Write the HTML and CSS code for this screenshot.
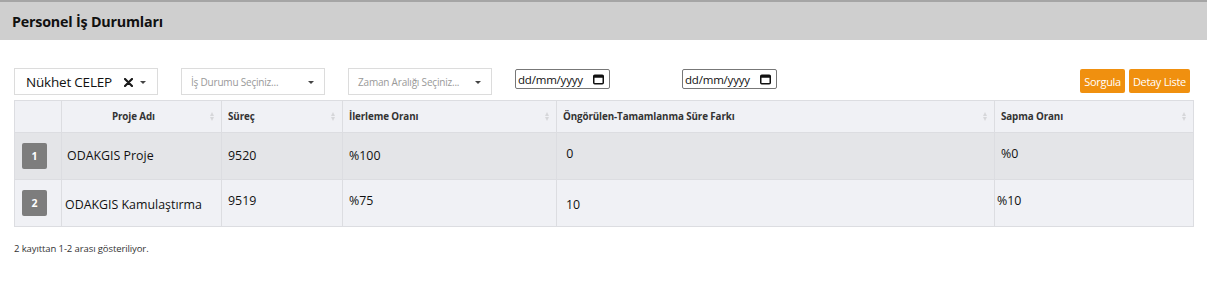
FILE: index.html
```html
<!DOCTYPE html>
<html lang="tr">
<head>
<meta charset="utf-8">
<link rel="stylesheet" href="styles.css">
</head>
<body>
<header class="page-head"><h1>Personel İş Durumları</h1></header>
<main class="content">
  <div class="filters">
    <div class="select sel-user"><span class="val">Nükhet CELEP</span><svg class="clear" width="9" height="9" viewBox="0 0 9 9"><path d="M1 1 L8 8 M8 1 L1 8" stroke="#1a1a1a" stroke-width="2.2" stroke-linecap="round"/></svg><span class="caret"></span></div>
    <div class="select"><span class="ph">İş Durumu Seçiniz...</span><span class="caret"></span></div>
    <div class="select"><span class="ph">Zaman Aralığı Seçiniz...</span><span class="caret"></span></div>
    <div class="date"><span>dd/mm/yyyy</span><svg width="11" height="11" viewBox="0 0 11 11"><rect x="0.75" y="1.25" width="9.5" height="8.5" rx="1" fill="none" stroke="#111" stroke-width="1.5"/><rect x="0.75" y="1.25" width="9.5" height="2.5" fill="#111"/></svg></div>
    <div class="date date2"><span>dd/mm/yyyy</span><svg width="11" height="11" viewBox="0 0 11 11"><rect x="0.75" y="1.25" width="9.5" height="8.5" rx="1" fill="none" stroke="#111" stroke-width="1.5"/><rect x="0.75" y="1.25" width="9.5" height="2.5" fill="#111"/></svg></div>
    <div class="buttons"><button class="btn">Sorgula</button><button class="btn">Detay Liste</button></div>
  </div>
  <table class="grid">
    <colgroup><col class="c0"><col class="c1"><col class="c2"><col class="c3"><col class="c4"><col class="c5"></colgroup>
    <thead>
      <tr>
        <th class="blank"></th>
        <th class="center">Proje Adı<i class="sort"></i></th>
        <th>Süreç<i class="sort"></i></th>
        <th>İlerleme Oranı<i class="sort"></i></th>
        <th>Öngörülen-Tamamlanma Süre Farkı<i class="sort"></i></th>
        <th>Sapma Oranı<i class="sort"></i></th>
      </tr>
    </thead>
    <tbody>
      <tr class="r1">
        <td><span class="badge">1</span></td>
        <td class="name">ODAKGIS Proje</td>
        <td>9520</td>
        <td>%100</td>
        <td class="up">&nbsp;0</td>
        <td class="up">%0</td>
      </tr>
      <tr class="r2">
        <td><span class="badge">2</span></td>
        <td class="name n2">ODAKGIS Kamulaştırma</td>
        <td class="up">9519</td>
        <td class="up">%75</td>
        <td class="down">10</td>
        <td class="up sh">%10</td>
      </tr>
    </tbody>
  </table>
  <p class="info">2 kayıttan 1-2 arası gösteriliyor.</p>
</main>
</body>
</html>
```
FILE: styles.css
```css
html, body { margin: 0; padding: 0; background: #fff; }
body { font-family: "Open Sans", "Noto Sans", sans-serif; color: #222; }

.page-head {
  background: #cfcfcf;
  border-top: 2px solid #a5a5a5;
  height: 38px;
  display: flex;
  align-items: center;
  padding-left: 12px;
}
.page-head h1 { margin: 0; font-size: 14.3px; font-weight: 700; color: #111; letter-spacing: -0.2px; }

.content { padding: 28px 14px 0 14px; }

.filters { display: flex; align-items: flex-start; height: 32px; }
.select {
  width: 144px; height: 27px; box-sizing: border-box;
  border: 1px solid #dcdcdc; background: #fff;
  display: flex; align-items: center; padding-left: 11px;
  margin-right: 23px; position: relative;
}
.select .val { font-size: 13.5px; color: #111; letter-spacing: -0.2px; }
.select .clear { margin-left: 12px; margin-top: 2px; }
.select .ph { font-size: 10px; color: #999; letter-spacing: -0.2px; }
.select:not(.sel-user) { padding-left: 9px; }
.select .caret {
  position: absolute; right: 10px; top: 12px;
  border-left: 3px solid transparent; border-right: 3px solid transparent; border-top: 3px solid #444;
}
.sel-user .caret { right: 11px; }

.date {
  width: 95px; height: 20px; box-sizing: border-box; margin-top: 1px;
  border: 1px solid #777; border-radius: 2px;
  display: flex; align-items: center; justify-content: space-between;
  padding: 0 5px 0 2px; font-size: 11.5px; color: #111; letter-spacing: -0.2px;
}
.date2 { margin-left: 72px; }

.buttons { margin-left: auto; margin-right: 3px; display: flex; gap: 4px; margin-top: 1px; }
.btn {
  background: #f0900f; color: #fff; border: 0; border-radius: 2px;
  font-family: "Open Sans", sans-serif; font-size: 11px; letter-spacing: -0.3px;
  height: 24px; padding: 0 4px;
}

.grid {
  width: 1179px; border-collapse: collapse; table-layout: fixed;
  background: #f0f1f5; border: 1px solid #dcdde1;
}
.c0 { width: 47px; } .c1 { width: 160px; } .c2 { width: 121px; }
.c3 { width: 214px; } .c4 { width: 438px; } .c5 { width: 199px; }
.grid th, .grid td { border-left: 1px solid #dcdde1; }
.grid th {
  height: 31px; font-size: 9.8px; font-weight: 700; color: #333; text-align: left;
  padding: 0 6px; position: relative; letter-spacing: -0.1px;
}
.grid th.center { text-align: center; padding-right: 22px; }
.sort {
  position: absolute; right: 6px; top: 11px; width: 5px; height: 10px;
}
.sort::before, .sort::after {
  content: ""; position: absolute; left: 0;
  border-left: 2.5px solid transparent; border-right: 2.5px solid transparent;
}
.sort::before { top: 0; border-bottom: 4px solid #d6d7da; }
.sort::after { top: 5px; border-top: 4px solid #d6d7da; }
.grid td {
  border-top: 1px solid #dcdde1; height: 42px; padding: 0 6px;
  font-size: 12.4px; color: #111; line-height: 16px;
}
.grid tr.r1 td { background: #e4e5e8; }
.grid td.name { padding-left: 5px; }
.grid td.n2 { padding-left: 3px; padding-top: 4px; }
.grid td.up { padding-bottom: 4px; }
.grid td.down { padding-top: 3px; padding-left: 9px; }
.grid td.sh { padding-left: 2px; }
.badge {
  display: flex; width: 25px; height: 26px; margin-left: 1px;
  background: #7d7d7d; border-radius: 2px; color: #fff;
  font-size: 10.5px; font-weight: 700; align-items: center; justify-content: center;
}

.info { margin: 15px 0 0 0; font-size: 9.5px; color: #333; letter-spacing: -0.1px; }
```
